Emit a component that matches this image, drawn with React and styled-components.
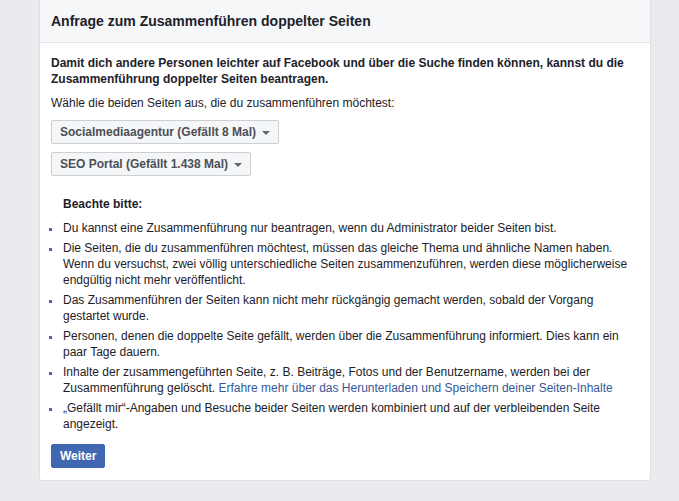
import React from 'react';
import styled, { createGlobalStyle } from 'styled-components';

// Grundstile der Seite
const GlobalStyle = createGlobalStyle`
  html, body {
    margin: 0;
    padding: 0;
    background: #e9ebee;
    font-family: "Liberation Sans", Arial, Helvetica, sans-serif;
    color: #1d2129;
  }
`;

const Page = styled.div`
  min-height: 501px;
  padding: 0 0 0 39px;
`;

const Card = styled.div`
  width: 612px;
  box-sizing: border-box;
  background: #fff;
  border: 1px solid #dddfe2;
  border-top: none;
  border-radius: 0 0 3px 3px;
`;

const Header = styled.div`
  height: 43px;
  box-sizing: border-box;
  padding: 0 11px;
  background: #f6f7f9;
  border-bottom: 1px solid #e5e5e5;
  font-size: 14px;
  font-weight: bold;
  line-height: 42px;
  color: #1d2129;
`;

const Body = styled.div`
  padding: 12px 11px 12px;
  font-size: 12px;
  line-height: 16px;
`;

const Intro = styled.p`
  margin: 0 0 8px;
  font-weight: bold;
`;

const Text = styled.p`
  margin: 0 0 9px;
`;

const Selects = styled.div`
  display: flex;
  flex-direction: column;
  align-items: flex-start;
  gap: 8px;
`;

const SelectButton = styled.button`
  display: inline-flex;
  align-items: center;
  gap: 6px;
  height: 24px;
  padding: 0 8px;
  box-sizing: border-box;
  background: #f5f6f7;
  border: 1px solid #ccd0d5;
  border-radius: 2px;
  font-family: inherit;
  font-size: 12px;
  font-weight: bold;
  color: #4b4f56;
  cursor: pointer;
`;

const Caret = styled.span`
  width: 0;
  height: 0;
  border-left: 4px solid transparent;
  border-right: 4px solid transparent;
  border-top: 4px solid #606770;
  margin-top: 1px;
`;

const Note = styled.div`
  margin: 20px 0 0 12px;
`;

const NoteTitle = styled.div`
  font-weight: bold;
  margin-bottom: 6px;
`;

const List = styled.ul`
  margin: 0;
  padding: 0;
  list-style: none;
`;

// Aufzählungspunkt als kleines Quadrat
const Item = styled.li`
  position: relative;
  padding: 2px 0;
  &::before {
    content: '';
    position: absolute;
    left: -14px;
    top: 10px;
    width: 3px;
    height: 3px;
    background: #4b67a1;
  }
`;

const Link = styled.a`
  color: #365899;
  text-decoration: none;
`;

const PrimaryButton = styled.button`
  display: block;
  margin-top: 10px;
  height: 24px;
  padding: 0 8px;
  background: #4267b2;
  border: 1px solid #4267b2;
  border-radius: 2px;
  color: #fff;
  font-family: inherit;
  font-size: 12px;
  font-weight: bold;
  cursor: pointer;
`;

const pages = ['Socialmediaagentur (Gefällt 8 Mal)', 'SEO Portal (Gefällt 1.438 Mal)'];

export default function App() {
  return (
    <Page>
      <GlobalStyle />
      <Card>
        <Header>Anfrage zum Zusammenführen doppelter Seiten</Header>
        <Body>
          <Intro>
            Damit dich andere Personen leichter auf Facebook und über die Suche finden können, kannst du die
            Zusammenführung doppelter Seiten beantragen.
          </Intro>
          <Text>Wähle die beiden Seiten aus, die du zusammenführen möchtest:</Text>
          <Selects>
            {pages.map(p => (
              <SelectButton key={p}>
                {p}
                <Caret />
              </SelectButton>
            ))}
          </Selects>
          <Note>
            <NoteTitle>Beachte bitte:</NoteTitle>
            <List>
              <Item>Du kannst eine Zusammenführung nur beantragen, wenn du Administrator beider Seiten bist.</Item>
              <Item>
                Die Seiten, die du zusammenführen möchtest, müssen das gleiche Thema und ähnliche Namen haben.
                Wenn du versuchst, zwei völlig unterschiedliche Seiten zusammenzuführen, werden diese möglicherweise
                endgültig nicht mehr veröffentlicht.
              </Item>
              <Item>
                Das Zusammenführen der Seiten kann nicht mehr rückgängig gemacht werden, sobald der Vorgang gestartet
                wurde.
              </Item>
              <Item>
                Personen, denen die doppelte Seite gefällt, werden über die Zusammenführung informiert. Dies kann ein
                paar Tage dauern.
              </Item>
              <Item>
                Inhalte der zusammengeführten Seite, z. B. Beiträge, Fotos und der Benutzername, werden bei der
                Zusammenführung gelöscht.{' '}
                <Link href="#">Erfahre mehr über das Herunterladen und Speichern deiner Seiten-Inhalte</Link>
              </Item>
              <Item>
                „Gefällt mir“-Angaben und Besuche beider Seiten werden kombiniert und auf der verbleibenden Seite
                angezeigt.
              </Item>
            </List>
          </Note>
          <PrimaryButton>Weiter</PrimaryButton>
        </Body>
      </Card>
    </Page>
  );
}
